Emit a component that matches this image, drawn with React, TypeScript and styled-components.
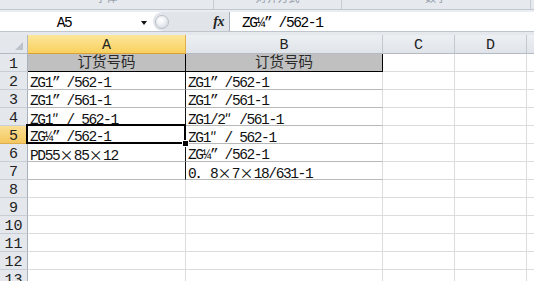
import React from 'react';
import styled, { createGlobalStyle, css } from 'styled-components';

const GlobalStyle = createGlobalStyle`
  html, body {
    margin: 0;
    padding: 0;
    background: #fff;
    overflow: hidden;
  }
`;

// widths of the sheet columns (row header first)
const COLUMNS = ['A', 'B', 'C', 'D', 'E'];
const GRID_TEMPLATE = '28px 158px 197px 72px 72px 72px';

const ROWS: string[][] = [
  ['订货号码', '订货号码'],
  ['ZG1” /562-1', 'ZG1” /562-1'],
  ['ZG1” /561-1', 'ZG1” /561-1'],
  ['ZG1″/ 562-1', 'ZG1/2″/561-1'],
  ['ZG¼” /562-1', 'ZG1″/ 562-1'],
  ['PD55×85×12', 'ZG¼” /562-1'],
  ['', '0．8×7×18/631-1'],
  [], [], [], [], [], [],
];

const SELECTED_ROW = 5;
const WIDE_CHARS = new Set(['″', '×', '．']);

const Window = styled.div`
  width: 534px;
  height: 281px;
  overflow: hidden;
  display: flex;
  flex-direction: column;
  background: #eaedf1;
  font-family: "Liberation Mono", monospace;
  color: #000;
`;

const Ribbon = styled.div`
  height: 10px;
  flex: none;
  box-sizing: border-box;
  display: flex;
  overflow: hidden;
  background: #e6eaef;
  border-bottom: 1px solid #c1c7cf;
`;

const RibbonGroup = styled.div<{ $width: number }>`
  width: ${p => p.$width}px;
  flex: none;
  display: flex;
  justify-content: center;
  border-right: 1px solid #c6ccd4;
  overflow: hidden;
`;

const GroupLabel = styled.span`
  font-family: "Noto Sans CJK SC", sans-serif;
  font-size: 11px;
  line-height: 12px;
  color: #959ca8;
  margin-top: -9px;
  white-space: nowrap;
`;

const FormulaBar = styled.div`
  margin-top: 2px;
  height: 20px;
  flex: none;
  box-sizing: border-box;
  display: flex;
  background: #fff;
  border-bottom: 1px solid #bfc5cd;
`;

const NameBox = styled.div`
  width: 153px;
  flex: none;
  display: flex;
  align-items: flex-start;
`;

const NameText = styled.div`
  width: 128px;
  text-align: center;
  font-size: 14.5px;
  letter-spacing: -1.4px;
  line-height: 20px;
  padding-top: 1px;
`;

const DropArrow = styled.div`
  margin: 9px 0 0 13px;
  width: 0;
  height: 0;
  border-left: 3.5px solid transparent;
  border-right: 3.5px solid transparent;
  border-top: 4px solid #111;
`;

const FxZone = styled.div`
  width: 77px;
  flex: none;
  box-sizing: border-box;
  display: flex;
  align-items: center;
  justify-content: space-between;
  padding: 0 5px 0 2px;
  background: #e1e5ea;
  border-radius: 10px 0 0 10px;
  border-right: 1px solid #a7afba;
`;

const Grip = styled.div`
  width: 14px;
  height: 14px;
  border-radius: 50%;
  box-sizing: border-box;
  border: 1px solid #b9c0c9;
  background: radial-gradient(circle at 40% 35%, #ffffff 0%, #f1f3f6 35%, #c9cfd7 100%);
`;

const FxLabel = styled.span`
  font-family: "Liberation Serif", serif;
  font-style: italic;
  font-weight: bold;
  font-size: 14px;
  color: #222;
  letter-spacing: -0.5px;
`;

const FormulaInput = styled.div`
  flex: 1;
  padding: 1px 0 0 12px;
  font-size: 14.5px;
  letter-spacing: -1.4px;
  line-height: 20px;
  white-space: nowrap;
`;

const Band = styled.div`
  height: 3px;
  flex: none;
  background: #e5e8ec;
`;

const Sheet = styled.div`
  flex: 1;
  display: grid;
  grid-template-columns: ${GRID_TEMPLATE};
  grid-template-rows: 19px;
  grid-auto-rows: 18px;
  background: #fff;
  overflow: hidden;
`;

const Corner = styled.div`
  box-sizing: border-box;
  display: flex;
  align-items: flex-end;
  justify-content: flex-end;
  padding: 0 4px 3px 0;
  background: #e4e8ed;
  border-right: 1px solid #b3bac4;
  border-bottom: 1px solid #b3bac4;
`;

const CornerMark = styled.div`
  width: 0;
  height: 0;
  border-left: 8px solid transparent;
  border-bottom: 8px solid #bcc2ca;
`;

const ColHeader = styled.div<{ $active?: boolean }>`
  box-sizing: border-box;
  text-align: center;
  font-size: 15px;
  line-height: 18px;
  padding-top: 2px;
  color: #222;
  background: linear-gradient(#edf0f3, #e0e4e9);
  border-right: 1px solid #c2c8d0;
  border-bottom: 1px solid #b3bac4;
  ${p => p.$active && css`
    background: linear-gradient(#fde69a, #f8d15f);
    border-right-color: #e0b04c;
    border-bottom-color: #d9a136;
  `}
`;

const RowHeader = styled.div<{ $active?: boolean }>`
  box-sizing: border-box;
  height: 18px;
  text-align: center;
  font-size: 15px;
  line-height: 18px;
  padding-top: 2px;
  color: #222;
  background: #e4e8ed;
  border-right: 1px solid #a9b1bc;
  border-bottom: 1px solid #c8ced6;
  ${p => p.$active && css`
    background: linear-gradient(#fadf95, #f4c75e);
    border-bottom-color: #dcae52;
  `}
`;

const Cell = styled.div<{
  $fill?: string;
  $right?: string;
  $bottom?: string;
  $title?: boolean;
  $selected?: boolean;
}>`
  position: relative;
  box-sizing: border-box;
  height: 18px;
  padding: 3px 0 0 2px;
  white-space: nowrap;
  font-size: 14.5px;
  letter-spacing: -1.4px;
  line-height: 16px;
  color: #111;
  background: ${p => p.$fill || '#fff'};
  border-right: 1px solid ${p => p.$right || '#dadcdd'};
  border-bottom: 1px solid ${p => p.$bottom || '#dadcdd'};

  ${p => p.$title && css`
    padding: 0;
    text-align: center;
    font-family: "Noto Sans CJK SC", sans-serif;
    letter-spacing: 0;
    line-height: 13px;
    color: #2a2a2a;
  `}

  ${p => p.$selected && css`
    &::after {
      content: '';
      position: absolute;
      top: -2px;
      left: -2px;
      right: -1px;
      bottom: -1px;
      border: 2px solid #000;
      z-index: 2;
    }
    &::before {
      content: '';
      position: absolute;
      right: -4px;
      bottom: -4px;
      width: 5px;
      height: 5px;
      background: #000;
      border: 1px solid #fff;
      z-index: 3;
    }
  `}
`;

const Wide = styled.span<{ $center?: boolean }>`
  display: inline-block;
  width: 14.6px;
  letter-spacing: 0;
  font-family: "Noto Sans CJK SC", sans-serif;
  font-size: 14px;
  line-height: 14px;
  text-align: ${p => (p.$center ? 'center' : 'left')};
`;

function renderText(text: string) {
  return Array.from(text).map((ch, i) =>
    WIDE_CHARS.has(ch)
      ? <Wide key={i} $center={ch === '×'}>{ch}</Wide>
      : <React.Fragment key={i}>{ch}</React.Fragment>
  );
}

function cellBorders(row: number, col: number) {
  const inTable = row <= 7 && col <= 1;
  if (!inTable) return {};
  if (row === 1) return { right: '#000', bottom: '#000', fill: '#c0c0c0' };
  return {
    right: col === 0 ? '#111' : undefined,
    bottom: '#b9b9b9',
  };
}

const App = () => {
  return (
    <Window>
      <GlobalStyle />
      <Ribbon>
        <RibbonGroup $width={213}><GroupLabel>字体</GroupLabel></RibbonGroup>
        <RibbonGroup $width={127}><GroupLabel>对齐方式</GroupLabel></RibbonGroup>
        <RibbonGroup $width={188}><GroupLabel>数字</GroupLabel></RibbonGroup>
      </Ribbon>

      <FormulaBar>
        <NameBox>
          <NameText>A5</NameText>
          <DropArrow />
        </NameBox>
        <FxZone>
          <Grip />
          <FxLabel>fx</FxLabel>
        </FxZone>
        <FormulaInput>{renderText('ZG¼” /562-1')}</FormulaInput>
      </FormulaBar>

      <Band />

      <Sheet>
        <Corner><CornerMark /></Corner>
        {COLUMNS.map(c => (
          <ColHeader key={c} $active={c === 'A'}>{c}</ColHeader>
        ))}

        {ROWS.map((values, r) => {
          const row = r + 1;
          return (
            <React.Fragment key={row}>
              <RowHeader $active={row === SELECTED_ROW}>{row}</RowHeader>
              {COLUMNS.map((c, ci) => {
                const b = cellBorders(row, ci);
                const value = values[ci] || '';
                return (
                  <Cell
                    key={c}
                    $fill={b.fill}
                    $right={b.right}
                    $bottom={b.bottom}
                    $title={row === 1 && ci <= 1}
                    $selected={row === SELECTED_ROW && ci === 0}
                  >
                    {renderText(value)}
                  </Cell>
                );
              })}
            </React.Fragment>
          );
        })}
      </Sheet>
    </Window>
  );
};

export default App;
